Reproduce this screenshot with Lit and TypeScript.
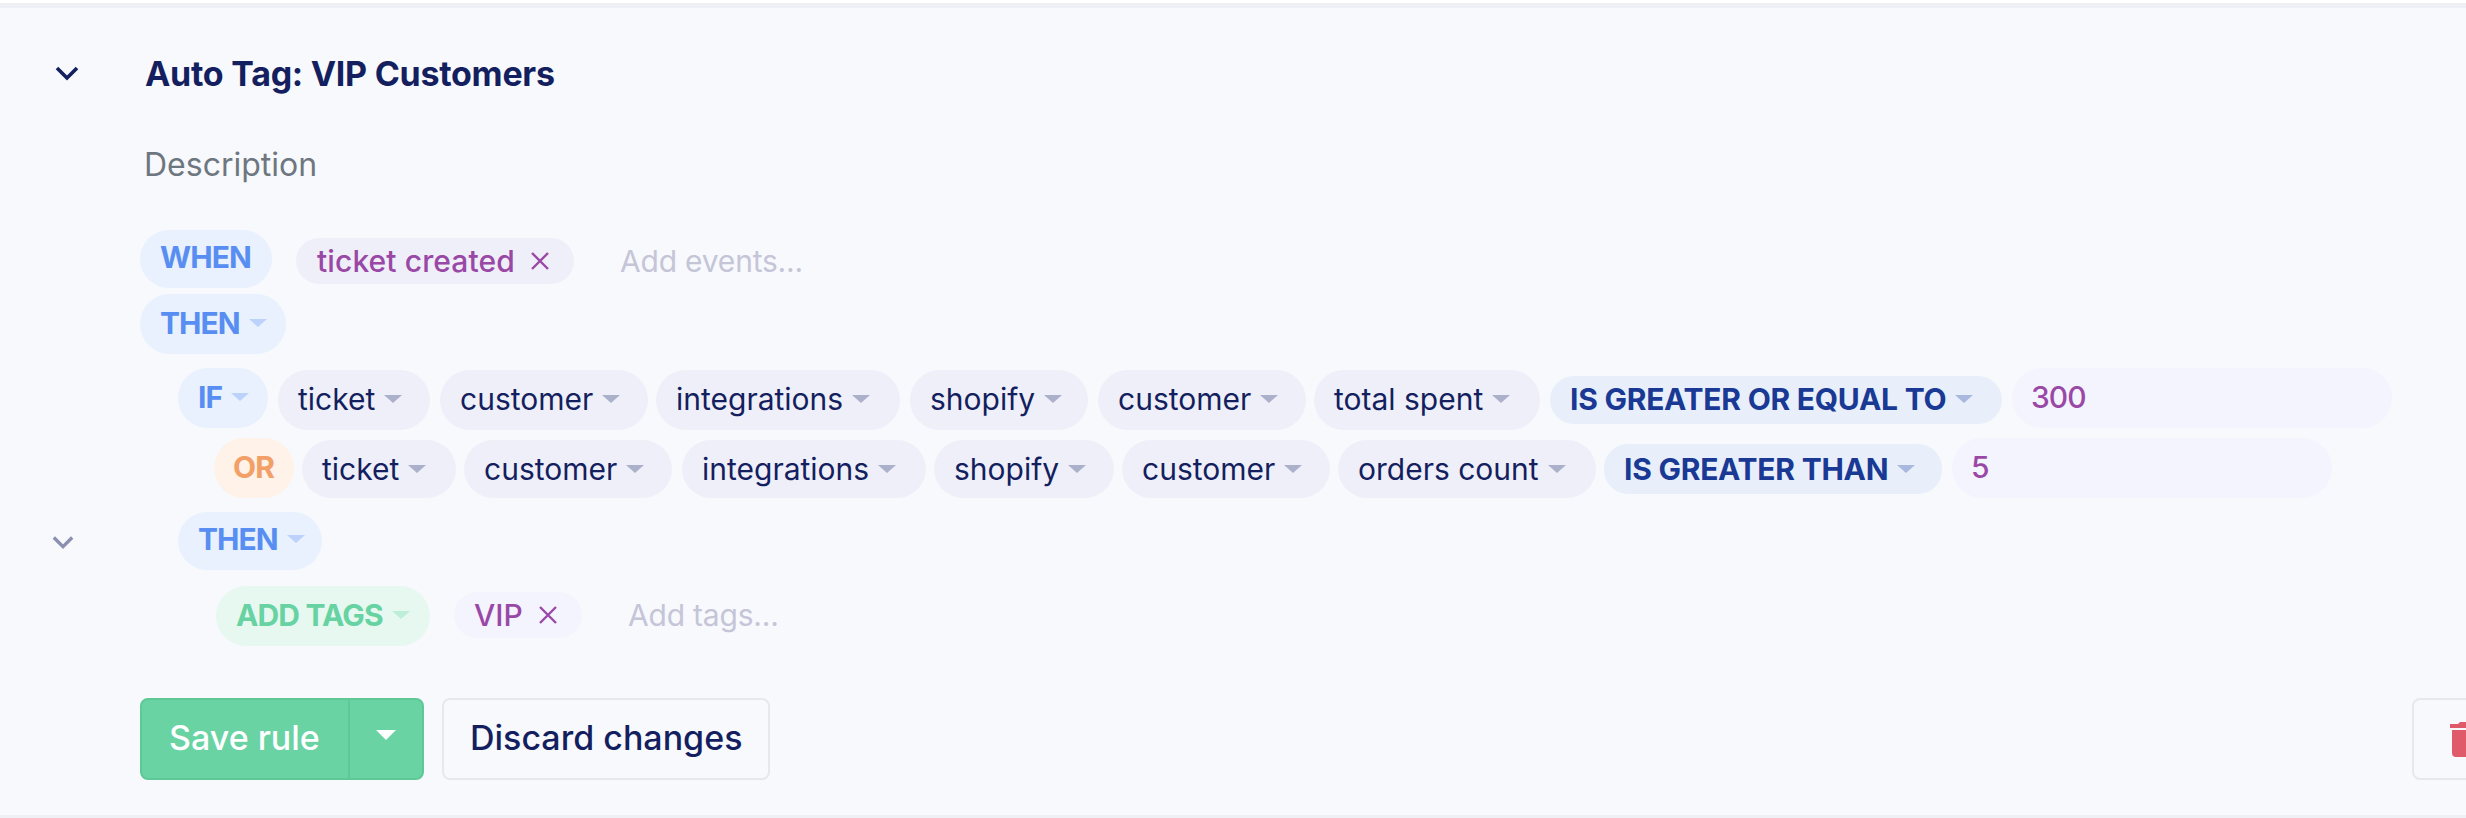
import { LitElement, css, html, svg } from 'lit'
import { customElement, property } from 'lit/decorators.js'

type Pill = { label: string; w: number; ml: number }

const ifPath: Pill[] = [
  { label: 'ticket', w: 152, ml: 10 },
  { label: 'customer', w: 208, ml: 10 },
  { label: 'integrations', w: 244, ml: 8 },
  { label: 'shopify', w: 178, ml: 10 },
  { label: 'customer', w: 208, ml: 10 },
  { label: 'total spent', w: 226, ml: 8 },
]

const orPath: Pill[] = [
  { label: 'ticket', w: 154, ml: 8 },
  { label: 'customer', w: 208, ml: 8 },
  { label: 'integrations', w: 244, ml: 10 },
  { label: 'shopify', w: 180, ml: 8 },
  { label: 'customer', w: 208, ml: 8 },
  { label: 'orders count', w: 258, ml: 8 },
]

@customElement('rule-pill')
export class RulePill extends LitElement {
  @property({ type: Boolean }) caret = false
  @property({ type: Boolean }) removable = false

  static styles = css`
    :host {
      display: flex;
      align-items: flex-start;
      box-sizing: border-box;
      flex: none;
      height: 60px;
      padding: 11px 0 0 20px;
      border-radius: 30px;
      font-size: 30px;
      line-height: 36px;
      white-space: nowrap;
      color: #141f5f;
      background: #efeff9;
      --caret: #acb1cb;
    }

    .caret {
      display: block;
      width: 18px;
      height: 8px;
      margin: 14px 0 0 9px;
      fill: var(--caret);
    }

    .cross {
      display: block;
      width: 18px;
      height: 18px;
      margin: 9px 0 0 16px;
      stroke: #9a48a6;
      stroke-width: 2.4;
      fill: none;
    }
  `

  render() {
    return html`
      <span><slot></slot></span>
      ${this.caret
        ? html`<svg class="caret" viewBox="0 0 18 8" preserveAspectRatio="none"><path d="M0 0h18L9 8z" /></svg>`
        : ''}
      ${this.removable
        ? html`<svg class="cross" viewBox="0 0 18 18"><path d="M1 1l16 16M17 1L1 17" /></svg>`
        : ''}
    `
  }
}

@customElement('app-root')
export class AppRoot extends LitElement {
  static styles = css`
    :host {
      display: block;
      box-sizing: border-box;
      width: 100%;
      height: 818px;
      overflow: hidden;
      border-top: 3px solid #fff;
      font-family: Inter, 'Liberation Sans', sans-serif;
      background: #f8f9fd;
      color: #141f5f;
    }

    .card {
      box-sizing: border-box;
      height: 815px;
      border-top: 5px solid #eff0f5;
      border-bottom: 3px solid #eff0f5;
      display: flex;
    }

    .gutter {
      flex: none;
      width: 140px;
    }

    .chevron {
      display: block;
      width: 24px;
      height: 16px;
      fill: none;
      stroke: #141f5f;
      stroke-width: 3.6;
    }

    .main-toggle {
      margin: 58px 0 0 55px;
    }

    .sub-toggle {
      width: 22px;
      margin: 453px 0 0 52px;
      stroke: #8b8fb0;
    }

    .body {
      flex: 1;
      min-width: 0;
    }

    .title {
      margin: 44px 0 0 5px;
      font-size: 34px;
      line-height: 44px;
      font-weight: 700;
      letter-spacing: -0.27px;
    }

    .description {
      margin: 49px 0 0 4px;
      font-size: 32px;
      line-height: 40px;
      color: #6e777f;
    }

    .row {
      display: flex;
      align-items: flex-start;
    }

    .when-row {
      margin-top: 45px;
    }

    .then-row {
      margin-top: 6px;
    }

    .if-row {
      margin: 14px 0 0 38px;
    }

    .or-row {
      margin: 8px 0 0 74px;
    }

    .inner-then {
      margin: 14px 0 0 38px;
    }

    .action-row {
      margin: 16px 0 0 76px;
    }

    .keyword {
      font-weight: 700;
      letter-spacing: -0.95px;
      color: #588ef2;
      background: #e8f1fd;
      --caret: #bcd2fb;
    }

    .when {
      width: 132px;
      height: 58px;
      padding-top: 9px;
    }

    .then {
      width: 146px;
    }

    .if {
      width: 90px;
    }

    .inner-then .then {
      width: 144px;
      height: 58px;
      padding-top: 9px;
    }

    .or {
      width: 80px;
      padding-left: 19px;
      color: #f2a067;
      background: #fef2e9;
    }

    .action {
      width: 214px;
      letter-spacing: -0.85px;
      color: #67d2a2;
      background: #e7f8f1;
      --caret: #bdeed8;
    }

    .path {
      margin-top: 2px;
    }

    .or-row .path {
      height: 58px;
    }

    .operator {
      font-weight: 700;
      letter-spacing: -0.25px;
      color: #193994;
      background: #e8effa;
      height: 48px;
      padding-top: 5px;
      border-radius: 24px;
      --caret: #a9b8de;
    }

    .if-row .operator {
      width: 452px;
      margin: 8px 0 0 10px;
    }

    .or-row .operator {
      width: 338px;
      height: 50px;
      padding-top: 7px;
      margin: 6px 0 0 8px;
    }

    .value {
      width: 380px;
      padding-left: 19px;
      margin-left: 10px;
      color: #9a48a6;
      font-weight: 500;
      letter-spacing: -1px;
      background: #f4f4fe;
    }

    .tag {
      height: 46px;
      padding-top: 5px;
      border-radius: 23px;
      color: #9a48a6;
      font-weight: 500;
    }

    .event {
      width: 278px;
      padding-left: 21px;
      letter-spacing: 0.1px;
      margin: 8px 0 0 24px;
    }

    .vip {
      width: 128px;
      margin: 6px 0 0 24px;
      background: #f4f4fe;
    }

    .placeholder {
      margin: 13px 0 0 46px;
      font-size: 30px;
      line-height: 36px;
      letter-spacing: -0.2px;
      color: #c5c5d8;
    }

    .action-row .placeholder {
      margin-top: 11px;
    }

    .footer {
      display: flex;
      margin-top: 52px;
    }

    .button {
      box-sizing: border-box;
      height: 82px;
      border: 2px solid #e7e8ec;
      border-radius: 8px;
      font-size: 34px;
      line-height: 75px;
      font-weight: 500;
      white-space: nowrap;
    }

    .save {
      display: flex;
      width: 284px;
      color: #fff;
      background: #69d3a4;
      border-color: #5fc897;
    }

    .save-label {
      box-sizing: border-box;
      width: 208px;
      padding-left: 27px;
      border-right: 2px solid #5fc897;
    }

    .save-caret {
      display: block;
      width: 20px;
      height: 10px;
      margin: 30px 0 0 26px;
      fill: #fff;
    }

    .discard {
      width: 328px;
      margin-left: 18px;
      padding-left: 26px;
    }

    .delete {
      flex: none;
      width: 96px;
      margin-left: auto;
      margin-right: -42px;
      padding: 22px 0 0 36px;
    }

    .trash {
      display: block;
      width: 32px;
      height: 35px;
      fill: #df5b69;
    }
  `

  renderPath(pills: Pill[]) {
    return pills.map(
      (p) => html`
        <rule-pill class="path" caret style="width: ${p.w}px; margin-left: ${p.ml}px">${p.label}</rule-pill>
      `
    )
  }

  render() {
    const chevron = svg`<path d="M2 2l10 10L22 2" />`
    return html`
      <div class="card">
        <div class="gutter">
          <svg class="chevron main-toggle" viewBox="0 0 24 16">${chevron}</svg>
          <svg class="chevron sub-toggle" viewBox="0 0 24 16">${chevron}</svg>
        </div>
        <div class="body">
          <div class="title">Auto Tag: VIP Customers</div>
          <div class="description">Description</div>

          <div class="row when-row">
            <rule-pill class="keyword when">WHEN</rule-pill>
            <rule-pill class="tag event" removable>ticket created</rule-pill>
            <span class="placeholder">Add events...</span>
          </div>
          <div class="row then-row">
            <rule-pill class="keyword then" caret>THEN</rule-pill>
          </div>
          <div class="row if-row">
            <rule-pill class="keyword if" caret>IF</rule-pill>
            ${this.renderPath(ifPath)}
            <rule-pill class="operator" caret>IS GREATER OR EQUAL TO</rule-pill>
            <rule-pill class="value">300</rule-pill>
          </div>
          <div class="row or-row">
            <rule-pill class="keyword or">OR</rule-pill>
            ${this.renderPath(orPath)}
            <rule-pill class="operator" caret>IS GREATER THAN</rule-pill>
            <rule-pill class="value">5</rule-pill>
          </div>
          <div class="row inner-then">
            <rule-pill class="keyword then" caret>THEN</rule-pill>
          </div>
          <div class="row action-row">
            <rule-pill class="keyword action" caret>ADD TAGS</rule-pill>
            <rule-pill class="tag vip" removable>VIP</rule-pill>
            <span class="placeholder">Add tags...</span>
          </div>

          <div class="footer">
            <div class="button save">
              <span class="save-label">Save rule</span>
              <svg class="save-caret" viewBox="0 0 20 10"><path d="M0 0h20L10 10z" /></svg>
            </div>
            <div class="button discard">Discard changes</div>
            <div class="button delete">
              <svg class="trash" viewBox="0 0 32 35">
                <path d="M0 2h8l2-2h12l2 2h8v4H0zM2 8h28v23a4 4 0 0 1-4 4H6a4 4 0 0 1-4-4z" />
              </svg>
            </div>
          </div>
        </div>
      </div>
    `
  }
}
